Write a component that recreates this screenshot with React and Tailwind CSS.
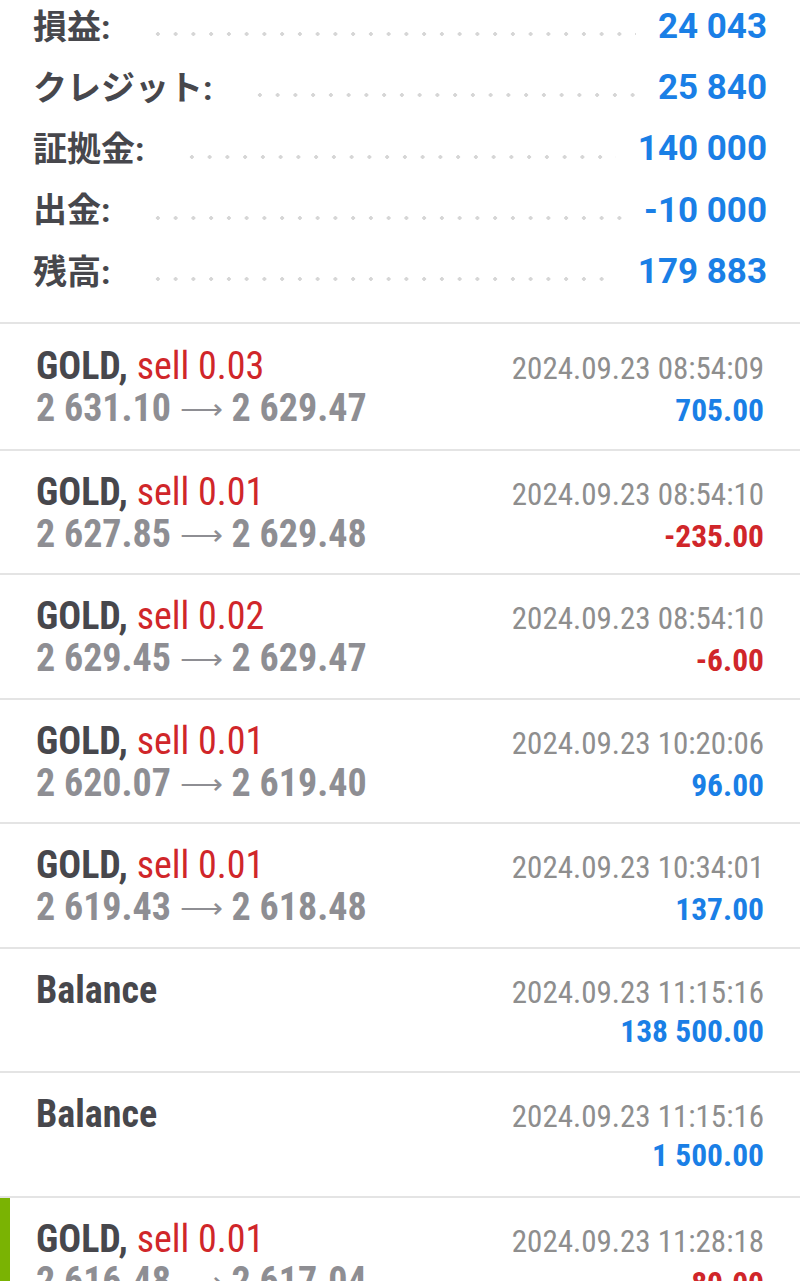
import React from 'react';

// 口座サマリー
const summary = [
  { label: '損益:', value: '24 043' },
  { label: 'クレジット:', value: '25 840' },
  { label: '証拠金:', value: '140 000' },
  { label: '出金:', value: '-10 000' },
  { label: '残高:', value: '179 883' },
];

// 取引履歴
const deals = [
  { side: 'sell 0.03', from: '2 631.10', to: '2 629.47', time: '2024.09.23 08:54:09', profit: '705.00' },
  { side: 'sell 0.01', from: '2 627.85', to: '2 629.48', time: '2024.09.23 08:54:10', profit: '-235.00' },
  { side: 'sell 0.02', from: '2 629.45', to: '2 629.47', time: '2024.09.23 08:54:10', profit: '-6.00' },
  { side: 'sell 0.01', from: '2 620.07', to: '2 619.40', time: '2024.09.23 10:20:06', profit: '96.00' },
  { side: 'sell 0.01', from: '2 619.43', to: '2 618.48', time: '2024.09.23 10:34:01', profit: '137.00' },
  { balance: true, time: '2024.09.23 11:15:16', profit: '138 500.00' },
  { balance: true, time: '2024.09.23 11:15:16', profit: '1 500.00' },
  { side: 'sell 0.01', from: '2 616.48', to: '2 617.04', time: '2024.09.23 11:28:18', profit: '-80.00', active: true },
];

function SummaryRow({ label, value }) {
  return (
    <div className="flex h-[61.25px] items-center">
      <span className="text-[34px] font-bold text-[#47474c] [font-family:Roboto,'Noto_Sans_CJK_JP',sans-serif]">
        {label}
      </span>
      <span className="mt-[14px] mr-[22px] ml-[38px] h-[4px] flex-1 bg-[radial-gradient(circle,#d6d6d6_1.7px,transparent_2.1px)] bg-[length:17.75px_4px] bg-repeat-x" />
      <span className="text-[35px] font-bold text-[#1a7fe6] [font-family:Roboto,sans-serif]">{value}</span>
    </div>
  );
}

function DealRow({ deal, first }) {
  const negative = deal.profit.startsWith('-');
  return (
    <div
      className={`relative border-t-2 border-[#e4e4e4] px-[36px] [font-family:'Roboto_Condensed','Liberation_Sans_Narrow',Roboto,sans-serif] ${
        first ? 'h-[127px] pt-[21px]' : 'h-[124.5px] pt-[20px]'
      }`}
    >
      {deal.active && <div className="absolute top-0 bottom-0 left-0 w-[10px] bg-[#7ab303]" />}
      <div className="flex h-[42px] items-baseline justify-between">
        <span className="text-[38px] leading-[42px] font-bold text-[#47474c]">
          {deal.balance ? 'Balance' : 'GOLD,'}
          {!deal.balance && <span className="font-normal text-[#d0262a]"> {deal.side}</span>}
        </span>
        <span className="text-[31px] leading-[42px] text-[#8e8e8e]">{deal.time}</span>
      </div>
      <div className="flex h-[42px] items-baseline justify-between">
        <span className="text-[38px] leading-[42px] font-bold text-[#8e8e93]">
          {deal.from ? (
            <>
              {deal.from} <span className="relative -top-[2px] text-[30px] font-light">⟶</span> {deal.to}
            </>
          ) : null}
        </span>
        <span className={`text-[31.5px] leading-[42px] font-bold ${negative ? 'text-[#d0262a]' : 'text-[#1a7fe6]'}`}>
          {deal.profit}
        </span>
      </div>
    </div>
  );
}

export default function App() {
  return (
    <div className="h-[1281px] w-[800px] overflow-hidden bg-white">
      <div className="-mt-[3.5px] px-[33px] pb-[19px]">
        {summary.map(row => (
          <SummaryRow key={row.label} {...row} />
        ))}
      </div>
      {deals.map((deal, i) => (
        <DealRow key={i} deal={deal} first={i === 0} />
      ))}
    </div>
  );
}
